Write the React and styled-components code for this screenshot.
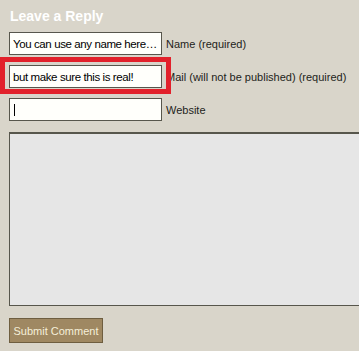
import React from "react";
import styled, { createGlobalStyle } from "styled-components";

const GlobalStyle = createGlobalStyle`
  html, body {
    margin: 0;
    padding: 0;
    background: #d9d5ca;
    overflow: hidden;
  }
`;

const Page = styled.div`
  position: relative;
  width: 359px;
  height: 351px;
  padding: 7px 9px 0;
  box-sizing: border-box;
  overflow: hidden;
  font-family: "Liberation Sans", Arial, sans-serif;
`;

const Title = styled.h3`
  margin: 0 0 7px 1px;
  font-family: "Liberation Sans", Arial, sans-serif;
  font-size: 14px;
  font-weight: bold;
  line-height: 18px;
  color: #ffffff;
`;

const Form = styled.form`
  display: flex;
  flex-direction: column;
  gap: 10px;
`;

const Row = styled.div`
  display: flex;
  align-items: center;
  gap: 4px;
  height: 23px;
`;

const Field = styled.div`
  position: relative;
  flex: none;
  width: 153px;
  height: 23px;
`;

const Input = styled.input`
  width: 100%;
  height: 100%;
  box-sizing: border-box;
  margin: 0;
  padding: 1px 1px 0 3px;
  border: 1px solid #57564c;
  background: #fffffb;
  font-family: "Liberation Sans", Arial, sans-serif;
  font-size: 11.5px;
  letter-spacing: -0.4px;
  color: #000;
  outline: none;
`;

const Caret = styled.span`
  position: absolute;
  left: 5px;
  top: 6px;
  width: 1px;
  height: 12px;
  background: #000;
`;

const Label = styled.label`
  font-size: 11px;
  color: #1e1e1a;
  white-space: nowrap;
  padding-top: 1px;
`;

const TextArea = styled.textarea`
  display: block;
  flex: none;
  width: 420px;
  height: 174px;
  box-sizing: border-box;
  margin: 1px 0 0;
  border: 1px solid #57564c;
  border-top-width: 2px;
  background: #e6e6e6;
  resize: none;
  outline: none;
`;

const Submit = styled.button`
  align-self: flex-start;
  margin-top: 2px;
  width: 94px;
  height: 25px;
  padding: 1px 0 0;
  border: 1px solid #6e5e40;
  background: #9f8862;
  color: #f5efd9;
  font-family: "Liberation Sans", Arial, sans-serif;
  font-size: 11px;
  white-space: nowrap;
`;

const Highlight = styled.div`
  position: absolute;
  left: 0;
  top: 57px;
  width: 171px;
  height: 37px;
  box-sizing: border-box;
  border: 5px solid #e2212b;
  pointer-events: none;
`;

const fields = [
  { id: "author", value: "You can use any name here…", label: "Name (required)" },
  { id: "email", value: "but make sure this is real!", label: "Mail (will not be published) (required)" },
  { id: "url", value: "", label: "Website", caret: true },
];

export default function App() {
  return (
    <>
      <GlobalStyle />
      <Page>
        <Title>Leave a Reply</Title>
        <Form onSubmit={(e) => e.preventDefault()}>
          {fields.map((f) => (
            <Row key={f.id}>
              <Field>
                <Input id={f.id} defaultValue={f.value} />
                {f.caret && <Caret />}
              </Field>
              <Label htmlFor={f.id}>{f.label}</Label>
            </Row>
          ))}
          <TextArea />
          <Submit type="submit">Submit Comment</Submit>
        </Form>
        <Highlight />
      </Page>
    </>
  );
}
